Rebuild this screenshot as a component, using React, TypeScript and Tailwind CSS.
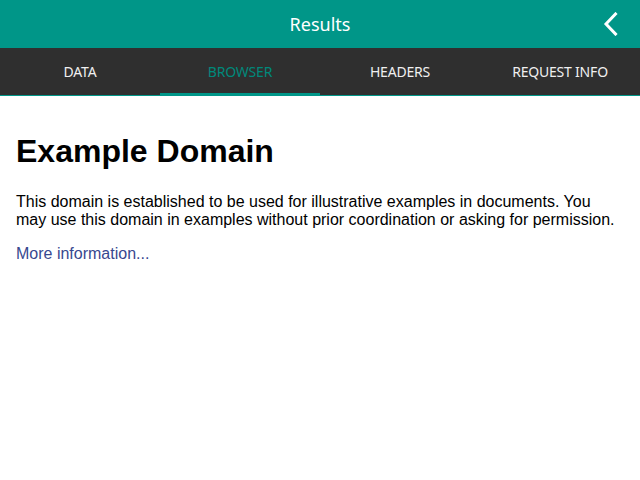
import React, { useState } from 'react';

const tabs = ['Data', 'Browser', 'Headers', 'Request Info'];

export default function App() {
  const [active, setActive] = useState(1);

  return (
    <div className="w-[640px] h-[480px] bg-white flex flex-col overflow-hidden">
      {/* Barra do topo */}
      <div className="h-12 bg-[#009688] flex items-center justify-center relative shrink-0">
        <span className="text-white text-[18px]" style={{ fontFamily: '"Noto Sans", sans-serif' }}>Results</span>
        <button className="absolute right-[16px] top-[12px] w-6 h-6 flex items-center justify-center">
          <svg width="24" height="24" viewBox="0 0 24 24" fill="none">
            <path d="M15.5 2 L6 12 L15.5 22" stroke="#fff" strokeWidth="3" strokeLinecap="square" />
          </svg>
        </button>
      </div>

      {/* Abas */}
      <div className="h-12 bg-[#2f2f2f] flex border-b border-[#009688] shrink-0">
        {tabs.map((t, i) => (
          <button
            key={t}
            onClick={() => setActive(i)}
            className={`flex-1 flex items-center justify-center uppercase text-[14px] tracking-[-0.2px] relative ${i === active ? 'text-[#00897b]' : 'text-[#f0f0f0]'}`}
            style={{ fontFamily: '"Noto Sans", sans-serif' }}
          >
            {t}
            {i === active && <span className="absolute left-0 right-0 -bottom-px h-[3px] bg-[#009688]" />}
          </button>
        ))}
      </div>

      {/* Conteúdo do navegador */}
      <div className="flex-1 p-4 text-black" style={{ fontFamily: '"Liberation Sans", Arial, sans-serif' }}>
        <h1 className="text-[32px] font-bold leading-[normal] mt-[21px] mb-0">Example Domain</h1>
        <p className="text-base leading-[normal] mt-[23px] mb-4">
          This domain is established to be used for illustrative examples in documents. You may use this domain in examples without prior coordination or asking for permission.
        </p>
        <p className="text-base leading-[normal] my-4">
          <a href="#" className="text-[#38488f]">More information...</a>
        </p>
      </div>
    </div>
  );
}
